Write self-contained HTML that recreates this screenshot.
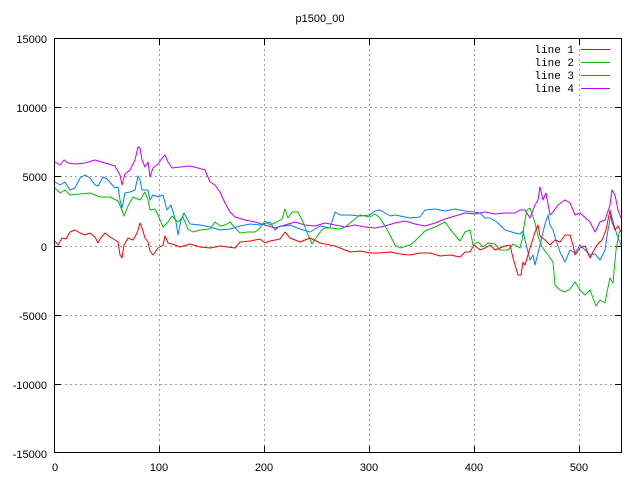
<!DOCTYPE html>
<html><head><style>body{margin:0;background:#fff}svg{display:block}text{font-family:"Liberation Sans",sans-serif;font-size:11px;fill:#000}</style></head><body>
<svg width="640" height="480" viewBox="0 0 640 480" xmlns="http://www.w3.org/2000/svg">
<rect width="640" height="480" fill="#fff"/>
<g stroke="#a0a0a0" stroke-dasharray="2,3" stroke-width="1" shape-rendering="crispEdges">
<path d="M159.5 39V452M264.5 39V452M369.5 39V452M474.5 39V452M579.5 39V452"/>
<path d="M55 107.5H621M55 176.5H621M55 246.5H621M55 315.5H621M55 384.5H621"/>
</g>
<g stroke="#000" stroke-width="1" fill="none" shape-rendering="crispEdges">
<rect x="54.5" y="38.5" width="567" height="414"/>
<path d="M55 107.5h6M55 176.5h6M55 246.5h6M55 315.5h6M55 384.5h6M621 107.5h-6M621 176.5h-6M621 246.5h-6M621 315.5h-6M621 384.5h-6M159.5 39v6M264.5 39v6M369.5 39v6M474.5 39v6M579.5 39v6M159.5 452v-6M264.5 452v-6M369.5 452v-6M474.5 452v-6M579.5 452v-6"/>
</g>
<text x="320" y="22" text-anchor="middle">p1500_00</text>
<g text-anchor="end">
<text x="47" y="43">15000</text><text x="47" y="112">10000</text><text x="47" y="181">5000</text><text x="47" y="251">0</text><text x="47" y="320">-5000</text><text x="47" y="389">-10000</text><text x="47" y="458">-15000</text>
</g>
<g text-anchor="middle">
<text x="55" y="471">0</text><text x="159" y="471">100</text><text x="264" y="471">200</text><text x="369" y="471">300</text><text x="474" y="471">400</text><text x="579" y="471">500</text>
</g>
<g text-anchor="end">
<text x="574" y="53" style="font-family:'Liberation Mono',monospace">line 1</text>
<text x="574" y="66" style="font-family:'Liberation Mono',monospace">line 2</text>
<text x="574" y="79" style="font-family:'Liberation Mono',monospace">line 3</text>
<text x="574" y="92" style="font-family:'Liberation Mono',monospace">line 4</text>
</g>
<rect x="581" y="49" width="29" height="1" fill="#ff0000"/>
<rect x="581" y="62" width="29" height="1" fill="#00c000"/>
<rect x="581" y="75" width="29" height="1" fill="#0080ff"/>
<rect x="581" y="88" width="29" height="1" fill="#c000ff"/>
<g fill="none" stroke-width="1" stroke-linejoin="round">
<polyline stroke="#c000ff" points="55,162 60,165 64,160 68,163 75,164 85,163 95,160 105,163 115,166 120,175 122,185 125,174 130,170 135,160 138,147 140,148 142,160 145,167 148,162 150,177 153,168 158,164 162,158 165,155 168,162 172,168 180,167 190,166 198,168 205,170 210,182 215,185 220,192 225,203 230,212 235,217 245,220 255,222 265,225 275,228 285,225 295,222 305,225 315,226 325,223 335,225 345,227 355,225 365,227 375,228 385,226 395,223 405,221 415,224 425,226 435,223 445,219 455,216 465,213 475,214 485,212 495,214 505,213 515,213 520,210 525,210 530,218 535,205 538,200 540,187 543,200 546,193 550,215 553,212 558,205 565,200 570,203 575,215 580,213 590,222 595,232 600,222 605,220 610,205 612,190 615,195 618,210 621,218"/>
<polyline stroke="#0080ff" points="55,182 60,185 65,182 70,190 75,188 80,178 85,175 90,178 95,185 98,186 103,177 107,179 115,188 118,187 120,200 122,208 125,193 130,192 135,190 138,176 140,180 142,190 148,190 150,200 153,195 158,197 163,195 167,210 171,205 176,222 178,235 181,220 184,213 190,224 200,225 210,227 220,230 230,229 240,226 250,224 260,225 270,222 275,230 280,226 285,226 290,225 300,229 310,232 320,226 330,228 335,212 340,215 350,215 360,216 370,215 375,211 380,210 390,216 395,215 400,216 410,218 420,217 425,210 435,209 445,211 455,209 465,211 474,212 480,213 485,218 490,218 497,222 505,230 515,233 520,234 523,231 525,240 530,260 533,255 535,265 540,245 545,224 548,215 550,225 553,230 556,240 560,252 565,262 570,250 575,253 580,245 585,250 590,255 595,254 600,260 605,250 608,230 611,214 614,225 617,235 621,245"/>
<polyline stroke="#00c000" points="55,188 60,193 65,190 70,195 80,194 90,193 100,197 110,197 118,201 122,210 124,216 128,206 133,197 140,200 145,192 148,200 150,210 155,209 158,215 163,227 168,222 172,216 178,222 183,217 188,229 193,232 200,230 210,229 215,222 220,226 225,225 230,222 235,228 240,233 248,232 255,232 260,228 265,221 270,225 275,223 282,219 285,209 288,218 292,212 298,212 303,222 308,235 312,244 318,235 322,230 325,228 330,228 340,229 345,227 350,223 360,215 370,217 375,214 380,218 385,226 390,235 395,245 400,248 410,245 415,241 425,231 435,227 445,222 450,229 455,235 460,241 465,232 470,230 473,245 478,242 483,247 488,243 495,244 500,250 508,250 513,244 520,248 522,240 525,220 527,210 530,208 535,223 538,236 542,247 548,255 553,262 555,285 560,290 565,292 570,289 575,282 580,290 585,295 590,290 593,298 596,306 600,300 605,303 607,292 610,278 613,283 616,250 619,233 621,230"/>
<polyline stroke="#ff0000" points="55,241 58,245 62,238 66,239 70,232 75,230 80,233 85,235 90,233 95,237 98,243 100,239 105,233 110,237 115,240 118,242 120,255 122,258 124,245 128,238 133,240 136,235 138,230 140,223 142,228 145,238 148,242 150,251 153,255 158,248 163,245 165,236 168,243 175,245 180,247 190,244 200,247 210,248 220,246 235,248 240,242 250,241 260,239 265,243 270,241 280,239 285,232 290,238 300,242 310,238 320,243 330,245 335,246 340,248 350,252 360,251 370,253 380,253 390,252 400,254 410,255 420,253 430,253 440,256 450,255 460,257 465,252 470,252 474,245 480,250 485,248 490,245 495,250 500,248 505,246 510,245 513,258 518,275 521,275 523,262 525,265 530,248 535,232 538,225 540,236 545,240 550,245 555,240 560,242 565,235 570,235 573,245 575,255 580,248 585,246 590,258 593,252 597,245 602,240 606,230 610,210 612,222 615,230 618,226 621,232"/>
</g>
</svg>
</body></html>
